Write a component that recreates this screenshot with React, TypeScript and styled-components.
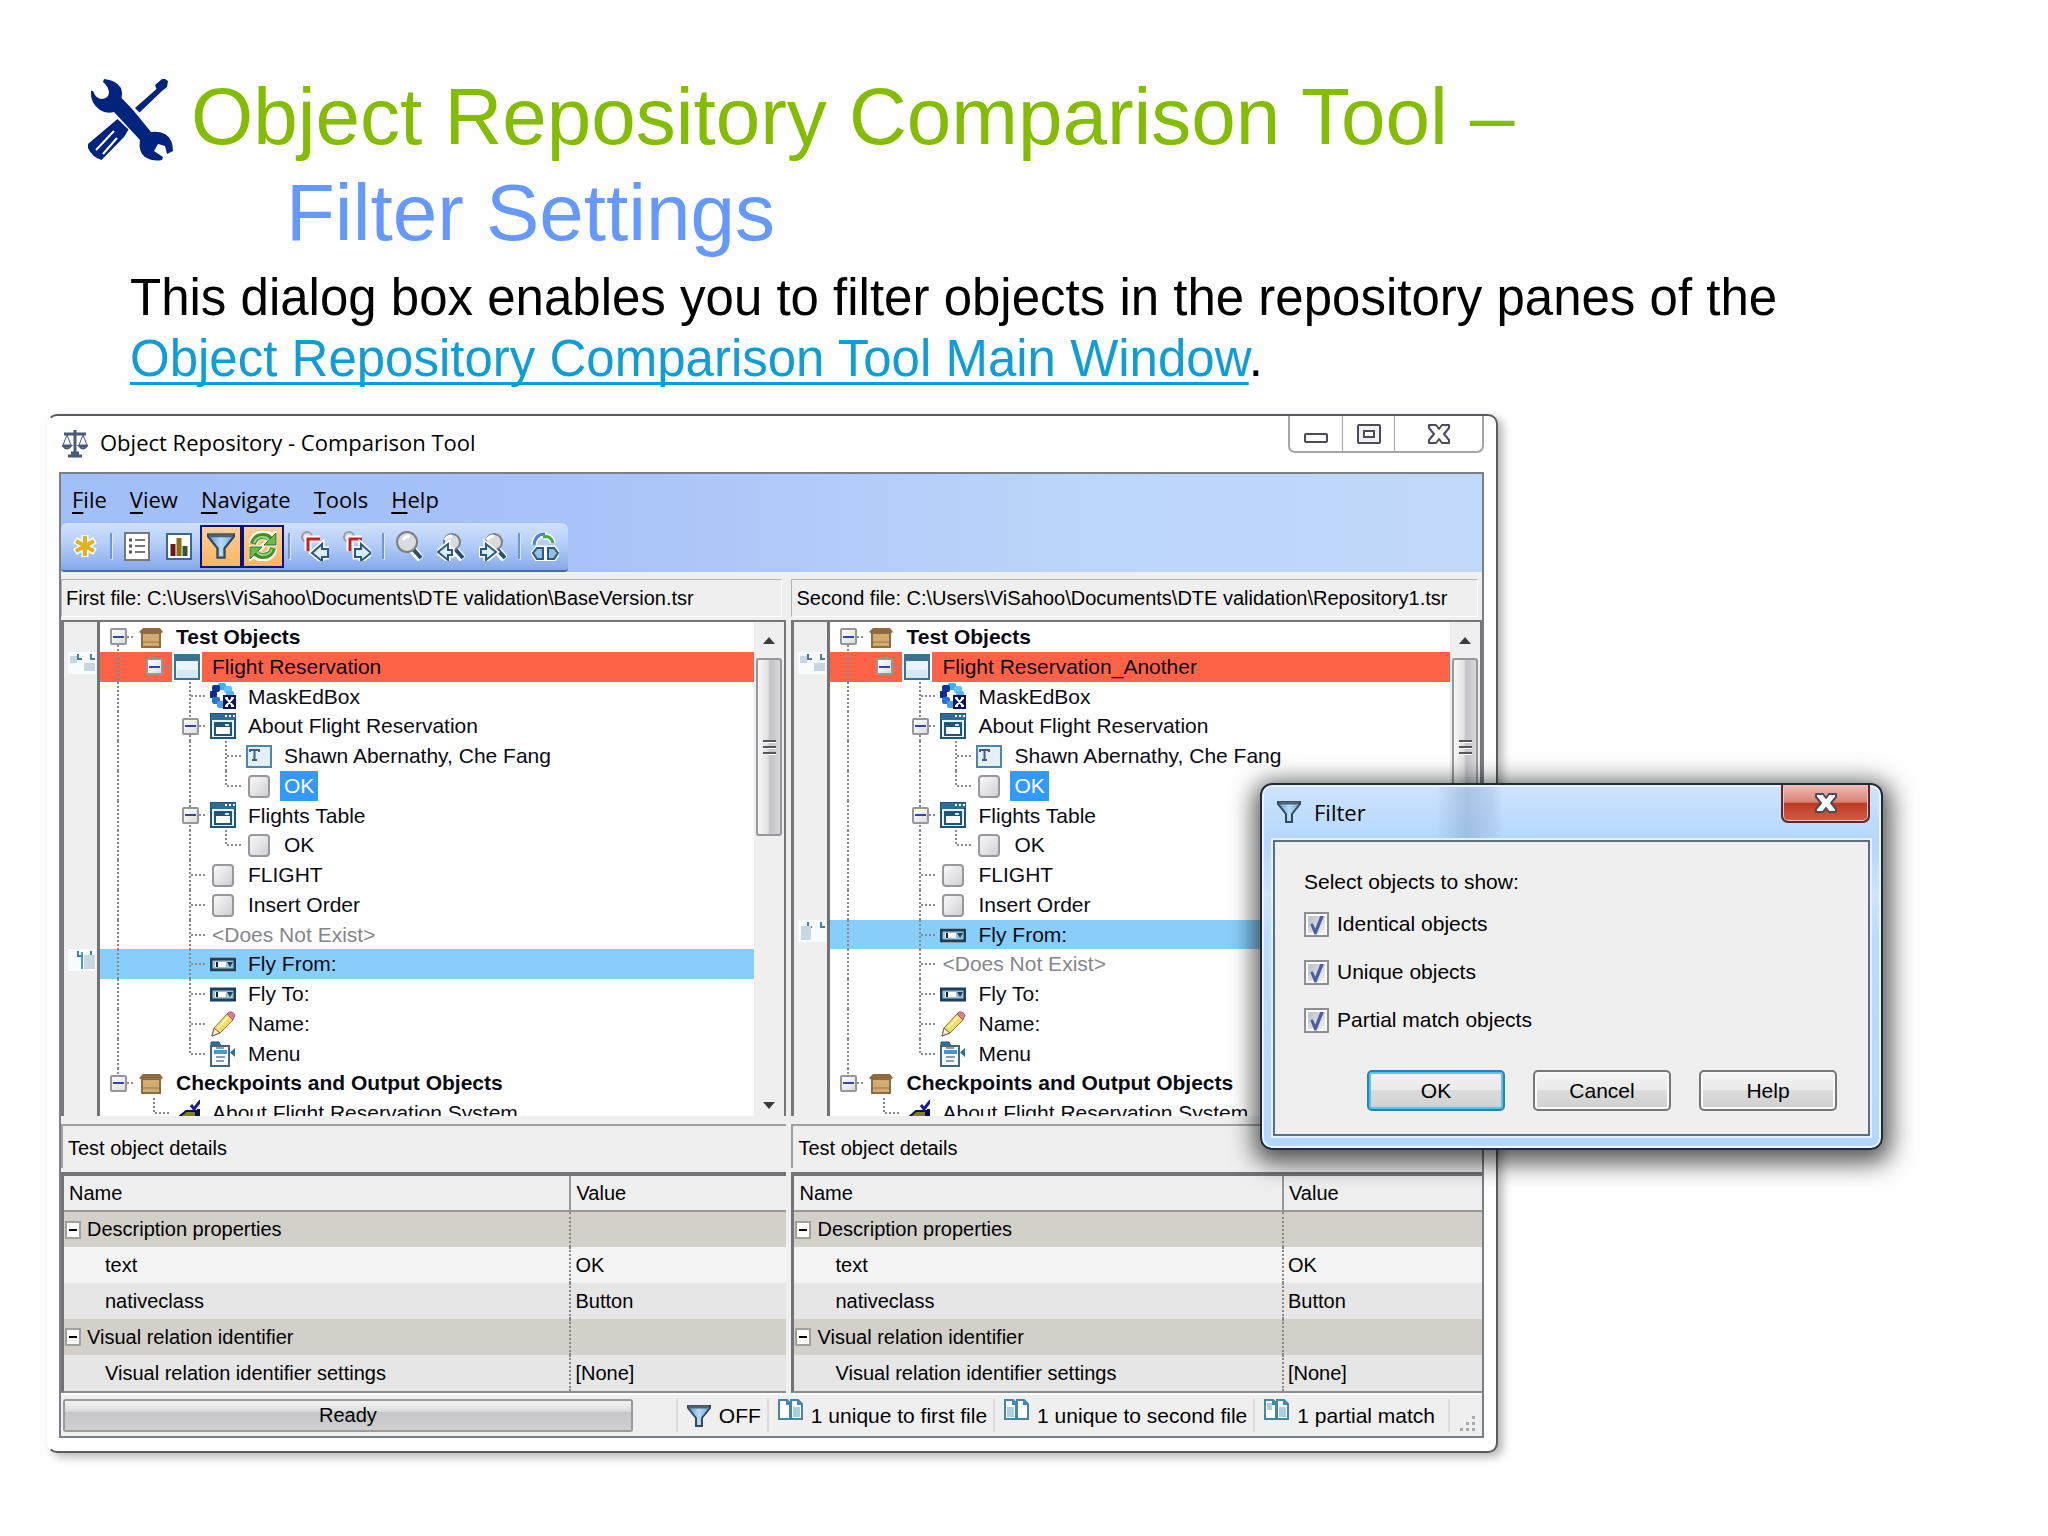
import React from "react";
import styled, { createGlobalStyle, css } from "styled-components";

const SANS = '"Liberation Sans", Arial, sans-serif';
const UI = '"Open Sans", "Noto Sans", sans-serif';

const GlobalStyle = createGlobalStyle`
  * { box-sizing: border-box; }
  body { margin: 0; background: #fefefe; color: #000; font-family: ${SANS}; }
  button { font: inherit; color: inherit; padding: 0; margin: 0; border: 0; background: none; cursor: pointer; }
  svg { display: block; flex: none; }
`;

/* ---------- slide heading ---------- */

const Slide = styled.main`
  padding: 69px 0 84px;
`;

const Title = styled.h1`
  margin: 0;
  font-size: 80px;
  line-height: 96px;
  font-weight: 400;
`;

const TitleLine = styled.span`
  display: flex;
  align-items: center;
  gap: 16px;
  padding-left: 87px;
  color: #84bd00;
`;

const Subtitle = styled.span`
  display: block;
  padding-left: 286px;
  color: #6699ff;
`;

const Intro = styled.p`
  margin: 6px 0 25px;
  padding: 0 200px 0 130px;
  font-size: 51px;
  line-height: 61px;
`;

const IntroLink = styled.a`
  color: #0f9dd9;
  text-decoration: underline;
  text-decoration-thickness: 3px;
  text-underline-offset: 6px;
  text-decoration-skip-ink: none;
`;

const Stage = styled.section`
  position: relative;
  margin: 0 550px 0 47px;
`;

/* ---------- application window ---------- */

const AppWindow = styled.div`
  padding: 0 12px 13px 10px;
  border: 2px solid #5c5c60;
  border-left-color: transparent;
  border-radius: 10px;
  background: #fefefe;
  box-shadow: 5px 4px 8px rgba(0, 0, 0, 0.28);
`;

const TitleBar = styled.header`
  display: flex;
  align-items: center;
  height: 56px;
  padding-left: 3px;
  gap: 12px;
  font-family: ${UI};
  font-size: 22px;
`;

const TitleText = styled.span`
  flex: 1;
  padding-bottom: 4px;
`;

const CaptionGroup = styled.div`
  display: flex;
  align-self: flex-start;
  height: 37px;
  border: 2px solid #a5a5a9;
  border-top: 0;
  border-radius: 0 0 7px 7px;
`;

const CaptionButton = styled.button<{ $wide?: boolean }>`
  display: grid;
  place-items: center;
  width: ${(p) => (p.$wide ? 88 : 52)}px;
  & + & { border-left: 1px solid #a5a5a9; }
`;

const Frame = styled.div`
  border: 2px solid #7b8087;
  background: #f0eff0;
`;

const CommandArea = styled.div`
  background: linear-gradient(90deg, #a1bff7 0%, #a6c2f7 35%, #bcd5fb 72%, #c1d8f9 100%);
`;

const MenuBar = styled.nav`
  display: flex;
  align-items: center;
  gap: 23px;
  height: 49px;
  padding: 0 11px;
  font-family: ${UI};
  font-size: 22px;
`;

const MenuButton = styled.button`
  line-height: 30px;
  & u { text-underline-offset: 4px; }
`;

const Toolbar = styled.div`
  display: inline-flex;
  align-items: center;
  height: 49px;
  padding: 0 2px 1px 3px;
  border-bottom: 2px solid #4666b0;
  border-radius: 6px 6px 4px 4px;
  background: linear-gradient(#d0e1fd, #b4cef8 45%, #84a9ea);
  vertical-align: top;
`;

const ToolButton = styled.button<{ $active?: boolean }>`
  display: grid;
  place-items: center;
  width: 42px;
  height: 43px;
  ${(p) =>
    p.$active &&
    css`
      border: 2px solid #0a1478;
      background: linear-gradient(#ffcf98, #fdb561);
    `}
`;

const ToolSeparator = styled.span`
  width: 2px;
  height: 26px;
  margin: 0 4px;
  background: #6f93d6;
  box-shadow: 1px 1px 0 #dce8fd;
`;

const Panes = styled.div`
  display: grid;
  grid-template-columns: minmax(0, 726fr) minmax(0, 691fr);
  column-gap: 5px;
`;

const Pane = styled.section`
  min-width: 0;
`;

const FileLabel = styled.div`
  height: 38px;
  margin: 7px 4px 3px 0;
  padding-left: 4px;
  border: 1px solid #b2b2b2;
  border-right-color: #fff;
  border-bottom-color: #fff;
  font-size: 20px;
  line-height: 36px;
  white-space: nowrap;
  overflow: hidden;
`;

const TreeBox = styled.div`
  display: flex;
  height: 496px;
  border-top: 2px solid #77777a;
  border-left: 3px solid #77777a;
  background: #fff;
  overflow: hidden;
`;

const rowTrack = css`
  display: grid;
  grid-template-rows: repeat(17, 1fr);
  height: 506px;
  margin: 0;
  padding: 0;
`;

const Gutter = styled.div`
  ${rowTrack}
  flex: none;
  width: 33px;
  justify-items: end;
  background: #f0eff0;
`;

const GutterMark = styled.span<{ $row: number }>`
  grid-row: ${(p) => p.$row};
  align-self: start;
  margin-right: 1px;
`;

const GutterEdge = styled.div`
  flex: none;
  width: 3px;
  background: #737376;
`;

const Tree = styled.ul`
  ${rowTrack}
  flex: 1;
  min-width: 0;
  list-style: none;
  font-size: 21px;
`;

const rowTone = { none: "transparent", red: "#ff6347", blue: "#87cefa" };
type Tone = keyof typeof rowTone;

const TreeRow = styled.li<{ $tone: Tone }>`
  display: flex;
  align-items: stretch;
  min-height: 0;
  white-space: nowrap;
  background: ${(p) => rowTone[p.$tone]};
`;

const vDots = "repeating-linear-gradient(#8a8a8e 0 2px, transparent 2px 4px)";
const hDots = "repeating-linear-gradient(90deg, #8a8a8e 0 2px, transparent 2px 4px)";
const guides: Record<string, string> = {
  " ": "none",
  "|": `${vDots} 17px 0 / 2px 100% no-repeat`,
  T: `${vDots} 17px 0 / 2px 100% no-repeat, ${hDots} 19px 50% / 15px 2px no-repeat`,
  L: `${vDots} 17px 0 / 2px 50% no-repeat, ${hDots} 19px 50% / 15px 2px no-repeat`,
  F: `${vDots} 17px 100% / 2px 50% no-repeat, ${hDots} 19px 50% / 15px 2px no-repeat`,
};

const Guide = styled.span<{ $kind: string }>`
  flex: none;
  display: grid;
  place-items: center;
  width: 36px;
  background: ${(p) => guides[p.$kind]};
`;

const Expander = styled.button`
  display: grid;
  place-items: center;
  width: 17px;
  height: 17px;
  border: 2px solid #97979b;
  border-radius: 2px;
  background: linear-gradient(135deg, #fff, #dcdcdc);
  &::before { content: ""; width: 11px; height: 2px; background: #33459c; }
`;

const IconCell = styled.span<{ $halo?: boolean }>`
  flex: none;
  display: grid;
  place-items: center;
  width: 30px;
  margin-right: 6px;
  background: ${(p) => (p.$halo ? "#fff" : "none")};
`;

const NodeLabel = styled.span<{ $bold?: boolean; $muted?: boolean; $selected?: boolean }>`
  padding: 0 4px;
  line-height: 29px;
  font-weight: ${(p) => (p.$bold ? 700 : 400)};
  color: ${(p) => (p.$selected ? "#fff" : p.$muted ? "#85858a" : "#0a0a14")};
  background: ${(p) => (p.$selected ? "#3399ff" : "none")};
`;

const ScrollBar = styled.div`
  flex: none;
  display: flex;
  flex-direction: column;
  width: 32px;
  padding: 0 2px;
  background: #f0eff0;
  border-right: 2px solid #77777a;
`;

const ScrollArrow = styled.button<{ $down?: boolean }>`
  display: grid;
  place-items: center;
  height: ${(p) => (p.$down ? 20 : 36)}px;
`;

const ScrollThumb = styled.div`
  display: grid;
  place-content: center;
  gap: 3px;
  height: 178px;
  margin-bottom: auto;
  border: 2px solid #98989c;
  border-radius: 3px;
  background: linear-gradient(90deg, #f8f8f8, #e2e2e4 45%, #c3c3c7 55%, #d8d8da);
`;

const Grip = styled.span`
  width: 13px;
  height: 3px;
  border-bottom: 1px solid #fff;
  background: #55555c;
`;

/* ---------- object details ---------- */

const DetailsHeading = styled.h2`
  height: 44px;
  margin: 8px 0 4px;
  padding-left: 5px;
  border-top: 2px solid #a0a0a0;
  border-left: 2px solid #a0a0a0;
  font-size: 20px;
  font-weight: 400;
  line-height: 44px;
`;

const DetailsBox = styled.div`
  border-top: 4px solid #737376;
  border-left: 3px solid #737376;
  border-bottom: 2px solid #8c8c8e;
`;

const DetailsTable = styled.table`
  width: 100%;
  table-layout: fixed;
  border-collapse: collapse;
  font-size: 20px;
`;

const HeadCell = styled.th<{ $value?: number }>`
  width: ${(p) => (p.$value ? `${p.$value}px` : "auto")};
  height: 35px;
  padding: 0 5px;
  border-bottom: 2px solid #98989a;
  border-left: ${(p) => (p.$value ? "2px solid #98989a" : "0")};
  font-weight: 400;
  text-align: left;
`;

const shades = { group: "#d2d0c9", light: "#f4f4f4", dark: "#e7e6e7" };

const DetailRow = styled.tr<{ $shade: keyof typeof shades }>`
  height: 36px;
  background: ${(p) => shades[p.$shade]};
`;

const NameCell = styled.td<{ $child?: boolean }>`
  padding: 0 0 0 ${(p) => (p.$child ? 41 : 1)}px;
  white-space: nowrap;
`;

const ValueCell = styled.td`
  padding: 0 0 0 4px;
  border-left: 2px dotted #88888a;
`;

const GroupName = styled.span`
  display: flex;
  align-items: center;
  gap: 6px;
`;

const GroupToggle = styled.button`
  display: grid;
  place-items: center;
  width: 16px;
  height: 18px;
  border: 2px solid #a0a09c;
  background: #fff;
  &::before { content: ""; width: 8px; height: 2px; background: #000; }
`;

/* ---------- status bar ---------- */

const StatusBar = styled.footer`
  display: flex;
  align-items: stretch;
  height: 43px;
  padding: 4px 0 4px 2px;
  border-top: 2px solid #fff;
  font-size: 21px;
  white-space: nowrap;
`;

const Progress = styled.div`
  flex: 1;
  display: grid;
  place-items: center;
  border: 2px solid #9a9a9c;
  border-radius: 3px;
  background: linear-gradient(#f4f4f4, #dddddd 35%, #c6c6c8 40%, #d0d0d2);
  font-size: 20px;
`;

const StatusItem = styled.div<{ $first?: boolean }>`
  display: flex;
  align-items: center;
  gap: 8px;
  margin-left: ${(p) => (p.$first ? 43 : 0)}px;
  padding: 0 6px 0 9px;
  border-left: 2px solid #dcdcdc;
`;

const StatusText = styled.span`
  min-width: 0;
`;

const RaisedIcon = styled.span`
  align-self: flex-start;
`;

const SizeGrip = styled.div`
  display: flex;
  align-items: flex-end;
  justify-content: flex-end;
  width: 34px;
  margin-left: 7px;
  padding-right: 6px;
  border-left: 2px solid #dcdcdc;
`;

/* ---------- filter dialog ---------- */

const Dialog = styled.div`
  position: absolute;
  top: 369px;
  right: -385px;
  width: 623px;
  padding: 0 11px 12px;
  border: 2px solid #1d2b3c;
  border-radius: 12px;
  background: linear-gradient(90deg, transparent 28%, rgba(120, 150, 190, 0.4) 33%, rgba(150, 180, 215, 0.35) 37%, transparent 39%) top / 100% 56px no-repeat,
    linear-gradient(#cfe4fd 0, #b4d7fd 56px, #cfe4fa 110px, #bcdcff 150px, #b4d7fd 100%);
  box-shadow: inset 0 0 0 2px #eaf5ff, 1px 6px 24px 7px rgba(0, 0, 0, 0.66);
`;

const DialogBar = styled.header`
  display: flex;
  height: 55px;
  padding-left: 4px;
  font-family: ${UI};
  font-size: 22px;
`;

const DialogTitle = styled.h2`
  display: flex;
  align-items: center;
  flex: 1;
  gap: 13px;
  height: 100%;
  margin: 0;
  padding-bottom: 14px;
  padding-top: 12px;
  font: inherit;
`;

const DialogClose = styled.button`
  display: grid;
  place-items: center;
  width: 89px;
  height: 38px;
  border: 2px solid #5b2a2c;
  border-top: 0;
  border-radius: 0 0 7px 7px;
  background: linear-gradient(#eebcb4, #d98275 48%, #c03a22 50%, #cf5c48);
  box-shadow: inset 0 0 0 1px #f0c4bc;
`;

const DialogBody = styled.form`
  padding: 19px 31px 23px 29px;
  border: 2px solid #5c6f80;
  outline: 2px solid #e4f2ff;
  background: #f0eff0;
  font-size: 21px;
`;

const Choices = styled.fieldset`
  display: grid;
  margin: 0;
  padding: 0;
  border: 0;
`;

const Legend = styled.legend`
  padding: 0 0 5px;
  line-height: 42px;
`;

const Choice = styled.label`
  display: flex;
  align-items: center;
  gap: 8px;
  height: 48px;
  padding-bottom: 16px;
`;

const CheckBox = styled.input`
  appearance: none;
  display: grid;
  place-items: center;
  width: 25px;
  height: 25px;
  margin: 0;
  border: 2px solid #8e8f8f;
  outline: 0;
  background: linear-gradient(135deg, #b9bfc9, #f2f2f4) content-box, #fff;
  padding: 2px;
  &:checked::before {
    content: "";
    width: 15px;
    height: 19px;
    background: #4a5f9f;
    clip-path: polygon(8% 45%, 26% 42%, 42% 68%, 76% 0, 100% 0, 50% 100%, 36% 100%);
  }
`;

const DialogActions = styled.div`
  display: flex;
  justify-content: flex-end;
  gap: 28px;
  padding-top: 18px;
`;

const DialogButton = styled.button<{ $primary?: boolean }>`
  width: 138px;
  height: 41px;
  border: 2px solid ${(p) => (p.$primary ? "#2f80ae" : "#77777a")};
  border-radius: 5px;
  background: linear-gradient(#f4f4f4, #ebebeb 48%, #dcdcdd 50%, #cfcfd0);
  box-shadow: inset 0 0 0 2px ${(p) => (p.$primary ? "#4cc9f2" : "#fafafa")};
`;

/* ---------- drawings ---------- */

const ToolsLogo = () => (
  <svg width="88" height="90" viewBox="0 -6 88 90" fill="#00247d" aria-hidden="true">
    <path d="M68 7 75 1 78 1 81 3 80 9 75 13 52.5 34.5 48 30 69.5 11Z" />
    <path d="M30.5 41 41.5 51.5 37 59 14.5 82Q5 79 1 70V66Z" />
    <path d="M27 53 9 72M30 60 16 76" stroke="#fff" strokeWidth="2" />
    <path d="M17 1Q29 2 34 10Q36 15 34.500 20L46 32 64 54Q72 53 78 56Q86 61 86 73L80 76 78 68 71 66 67 73 76 79 75 82Q66 84 58 79Q51 74 53 62L27 34Q19 36 13 32Q3 25 4 13L6 13Q9 21 15 21Q22 20 22 14Q21 8 16 4Z" />
  </svg>
);

const ScalesIcon = () => (
  <svg width="26" height="28" viewBox="0 0 26 28" fill="none" stroke="#475a78" strokeWidth="2" aria-hidden="true">
    <path d="M2 4H24M13 0V24" strokeWidth="3" />
    <path d="M5 5 1 15H9ZM21 5 17 15H25Z" strokeWidth="1" />
    <path d="M1 16Q5 21 9 16ZM17 16Q21 21 25 16Z" fill="#9fb3cc" />
    <path d="M6 26H20M9 23H17" strokeWidth="3" />
  </svg>
);

const MinimizeIcon = () => (
  <svg width="24" height="24" viewBox="0 0 24 24" aria-hidden="true">
    <rect x="1" y="12" width="22" height="8" rx="1" fill="#fff" stroke="#4c4c58" strokeWidth="2" />
  </svg>
);

const MaximizeIcon = () => (
  <svg width="24" height="22" viewBox="0 0 24 22" stroke="#4c4c58" strokeWidth="2" aria-hidden="true">
    <rect x="1" y="2" width="22" height="18" rx="1" fill="#f1f1f3" />
    <rect x="7" y="8" width="10" height="6" fill="#fff" />
  </svg>
);

const CloseIcon = () => (
  <svg width="24" height="22" viewBox="0 0 24 22" aria-hidden="true">
    <path d="M2 2H9L12 6 15 2H22V5L17 11 22 17V20H15L12 16 9 20H2V17L7 11 2 5Z" fill="#fff" stroke="#4c4c58" strokeWidth="2" strokeLinejoin="round" />
  </svg>
);

const FunnelIcon = ({ size = 24 }: { size?: number }) => (
  <svg width={size} height={size} viewBox="0 0 24 24" aria-hidden="true">
    <defs>
      <linearGradient id="funnelFill" x1="0" y1="0" x2="1" y2="0">
        <stop offset="0" stopColor="#5d94c4" />
        <stop offset="0.5" stopColor="#b5dcf8" />
        <stop offset="1" stopColor="#6ea6d6" />
      </linearGradient>
    </defs>
    <path d="M1 2H23V4L15 14V22H9V14L1 4Z" fill="url(#funnelFill)" stroke="#34475e" strokeWidth="2" />
    <path d="M2 3H22" stroke="#53616f" strokeWidth="3" />
  </svg>
);

const box28 = { width: 28, height: 30, viewBox: "0 0 28 30", fill: "none", "aria-hidden": true } as const;

const StarIcon = () => (
  <svg {...box28}>
    <path d="M14 4V26M4 9 24 21M24 9 4 21" stroke="#fff" strokeWidth="7" />
    <path d="M14 5V25M5 10 23 20M23 10 5 20" stroke="#e3b01e" strokeWidth="4" />
  </svg>
);

const ListIcon = () => (
  <svg {...box28}>
    <rect x="2" y="2" width="24" height="27" fill="#fff" stroke="#77777c" strokeWidth="2" />
    <path d="M6 9H9M6 15H9M6 21H9" stroke="#55555a" strokeWidth="3" />
    <path d="M12 9H22M12 15H22M12 21H22" stroke="#77777c" strokeWidth="2" />
  </svg>
);

const ChartIcon = () => (
  <svg {...box28}>
    <rect x="2" y="3" width="24" height="25" fill="#fff" stroke="#3d6a8a" strokeWidth="2" />
    <path d="M8 25V13" stroke="#6b1a1c" strokeWidth="5" />
    <path d="M14 25V7" stroke="#8a6d12" strokeWidth="5" />
    <path d="M20 25V15" stroke="#2c5a2a" strokeWidth="5" />
  </svg>
);

const SyncIcon = () => (
  <svg {...box28}>
    <path d="M4 13Q6 4 14 4Q19 4 22 7M24 17Q22 26 14 26Q9 26 6 23" stroke="#fff" strokeWidth="9" />
    <path d="M27 1V14H14ZM1 29V16H14Z" fill="#fff" stroke="#fff" strokeWidth="3" />
    <path d="M4 13Q6 5 14 5Q19 5 21 8M24 17Q22 25 14 25Q9 25 7 22" stroke="#3f8f2c" strokeWidth="6" />
    <path d="M27 2V14H15Z M1 28V16H13Z" fill="#6fb850" stroke="#2f7420" />
    <path d="M5 12Q7 6 14 6Q18 6 20 9M23 18Q21 24 14 24Q10 24 8 21" stroke="#9fd67c" strokeWidth="2" />
  </svg>
);

const arrowPath = { left: "M27 18H21V13L11 22 21 30V26H27Z", right: "M12 18H18V13L28 22 18 30V26H12Z" };

const DiffIcon = ({ dir }: { dir: "left" | "right" }) => (
  <svg {...box28}>
    <circle cx="6" cy="6" r="5" fill="#d9d9dd" stroke="#9a9aa0" strokeWidth="2" />
    <path d="M19 8H7V20" stroke="#fff" strokeWidth="7" />
    <path d="M19 8H7V20" stroke="#c62222" strokeWidth="3" />
    <path d={arrowPath[dir]} fill="#e6f3fc" stroke="#fff" strokeWidth="5" />
    <path d={arrowPath[dir]} fill="#d9edfa" stroke="#2f577c" strokeWidth="2" />
  </svg>
);

const SearchIcon = ({ dir }: { dir?: "left" | "right" }) => (
  <svg {...box28}>
    <path d="M18 19 26 28" stroke="#fff" strokeWidth="8" />
    <path d="M18 18 26 27" stroke="#274f74" strokeWidth="4" />
    <circle cx={dir ? 15 : 12} cy="11" r={dir ? 8 : 10} fill="#d9dcde" stroke="#7d7d82" strokeWidth="2" />
    <path d="M8 9Q10 5 15 5" stroke="#fff" strokeWidth="3" />
    {dir && (
      <>
        <path d={dir === "left" ? "M15 19H11V13L1 21 11 29V24H15Z" : "M2 18H7V13L17 21 7 29V24H2Z"} stroke="#fff" strokeWidth="5" />
        <path
          d={dir === "left" ? "M15 19H11V13L1 21 11 29V24H15Z" : "M2 18H7V13L17 21 7 29V24H2Z"}
          fill="#d9edfa"
          stroke="#2f577c"
          strokeWidth="2"
        />
      </>
    )}
  </svg>
);

const SwapIcon = () => (
  <svg {...box28}>
    <path d="M3 14Q4 3 16 4M12 6Q20 4 22 12" stroke="#fff" strokeWidth="6" />
    <path d="M3 14Q4 3 14 3" stroke="#4a7fe0" strokeWidth="3" />
    <path d="M12 6Q20 4 22 12" stroke="#3fae3a" strokeWidth="3" />
    <path d="M6 17H12V28H6L2 22ZM17 17H23L27 22 23 28H17Z" stroke="#fff" strokeWidth="5" />
    <path d="M6 17H12V28H6L2 22ZM17 17H23L27 22 23 28H17Z" fill="#8fc0e6" stroke="#2f577c" strokeWidth="2" />
  </svg>
);

type IconKind = "box" | "window" | "ocx" | "dialog" | "static" | "button" | "combo" | "edit" | "menu" | "check";

const ocxDots: [number, number, string][] = [
  [12, 3, "#39b0ea"], [18, 6, "#5cc4ee"], [6, 5, "#12319c"], [3, 11, "#0d2a8c"],
  [6, 17, "#2c6fd2"], [11, 21, "#4aa0e6"], [20, 11, "#58b6ea"],
];

const drawings: Record<IconKind, React.ReactNode> = {
  box: (
    <>
      <path d="M1 8 5 4H22L25 8 22 10H4Z" fill="#8e6b40" />
      <rect x="4" y="9" width="18" height="14" fill="#d3ac72" stroke="#8e6b40" strokeWidth="2" />
      <path d="M5 18H21" stroke="#b98f55" strokeWidth="2" />
    </>
  ),
  window: (
    <>
      <rect x="1" y="1" width="24" height="24" fill="#eaf5fb" stroke="#3a7296" strokeWidth="2" />
      <path d="M1 4H25" stroke="#3a7296" strokeWidth="6" />
      <path d="M3 20H23" stroke="#d2e8f4" strokeWidth="8" />
    </>
  ),
  ocx: (
    <>
      {ocxDots.map(([x, y, fill]) => (
        <rect key={`${x}-${y}`} x={x - 4} y={y - 3} width="8" height="7" rx="2" fill={fill} />
      ))}
      <rect x="13" y="12" width="13" height="14" fill="#0a1260" />
      <path d="M16 15 23 23M23 15 16 23M15 15H18M21 15H24M15 23H18M21 23H24" stroke="#fff" strokeWidth="2" />
    </>
  ),
  dialog: (
    <>
      <rect x="1" y="1" width="24" height="24" fill="#e8f4fb" stroke="#1f5578" strokeWidth="2" />
      <path d="M1 4H25" stroke="#2f6d94" strokeWidth="6" />
      <path d="M15 3H17M19 3H21M23 3H25" stroke="#fff" strokeWidth="2" />
      <rect x="5" y="10" width="16" height="12" fill="#fff" stroke="#1f5578" strokeWidth="2" />
      <path d="M5 12H21" stroke="#1f5578" strokeWidth="4" />
      <path d="M15 12H19" stroke="#cfe6f4" strokeWidth="2" />
    </>
  ),
  static: (
    <>
      <rect x="1" y="3" width="24" height="21" fill="#e3f0f8" stroke="#4d86a8" strokeWidth="2" />
      <path d="M4 9V7H13V9M8.500 7V17M6 17H11" fill="none" stroke="#3f5f7c" strokeWidth="2" />
    </>
  ),
  button: <rect x="3" y="3" width="20" height="21" rx="3" fill="url(#btnFace)" stroke="#98989c" strokeWidth="2" />,
  combo: (
    <>
      <rect x="0" y="6" width="26" height="15" fill="#fff" />
      <rect x="1" y="8" width="24" height="11" fill="#9fc0d4" stroke="#1c4059" strokeWidth="3" />
      <rect x="5" y="11" width="11" height="5" fill="#fff" />
      <path d="M7 11V16" stroke="#10202c" strokeWidth="2" />
      <path d="M17 11H23L20 16Z" fill="#1c4059" />
    </>
  ),
  edit: (
    <>
      <path d="M2 25 4 17 17 3 23 9 10 22Z" fill="#f5dc69" stroke="#8d7838" strokeWidth="1" />
      <path d="M17 3 19 1Q23 0 25 4L23 9Z" fill="#d98095" stroke="#a55c6e" />
      <path d="M2 25 4 17 10 22Z" fill="#f4ead2" stroke="#6e6248" />
      <path d="M8 17 18 6" stroke="#fff2ac" strokeWidth="2" />
    </>
  ),
  menu: (
    <>
      <path d="M1 5V1H9L11 5Z" fill="#2f7099" stroke="#1f5578" />
      <path d="M1 5H19V25H1Z" fill="#f4f9fc" stroke="#45667e" strokeWidth="2" />
      <path d="M4 11H17" stroke="#4b97cc" strokeWidth="4" />
      <path d="M6 7H14M6 16H15M6 20H14" stroke="#8aa0ae" strokeWidth="2" />
      <path d="M25 7V16L20 11.500Z" fill="#2f7099" />
    </>
  ),
  check: (
    <>
      <path d="M0 17H5L12 11H22V26H2Z" fill="#80801c" stroke="#0a0a50" strokeWidth="2" />
      <path d="M17 5 20 9 27 0" fill="none" stroke="#1a1a9a" strokeWidth="3" />
      <path d="M25 9V26" stroke="#0a0a60" strokeWidth="4" />
    </>
  ),
};

const NodeIcon = ({ kind }: { kind: IconKind }) => (
  <svg width="26" height="26" viewBox="0 0 26 26" aria-hidden="true">
    {kind === "button" && (
      <defs>
        <linearGradient id="btnFace" x1="0" y1="0" x2="1" y2="1">
          <stop offset="0" stopColor="#fbfbfb" />
          <stop offset="1" stopColor="#cfcdd2" />
        </linearGradient>
      </defs>
    )}
    {drawings[kind]}
  </svg>
);

type Mark = "moved" | "second" | "first";

const MarkIcon = ({ kind }: { kind: Mark }) => (
  <svg width="28" height="22" viewBox="0 0 28 22" aria-hidden="true">
    <rect width="28" height="22" fill="#f9fcfd" />
    <path d="M10 2V7H14M23 2V7H27" fill="none" stroke="#4b7f9e" strokeWidth="2" />
    {kind === "moved" && <path d="M2 4H9V11H2ZM16 11H27V19H16Z" fill="#c4d7e2" />}
    {kind === "first" && <path d="M3 6H13V20H3Z" fill="#c8d9e3" />}
    {kind === "second" && (
      <>
        <path d="M16 6H27V20H16Z" fill="#c8d9e3" />
        <path d="M14 3V20" stroke="#4b9bc0" strokeWidth="2" />
      </>
    )}
  </svg>
);

const FilesIcon = ({ kind }: { kind: Mark }) => (
  <svg width="25" height="21" viewBox="0 0 25 21" aria-hidden="true">
    <path d="M1 1H9L12 4V20H1ZM13 1H20L24 5V20H13Z" fill="#fff" stroke="#4585a6" strokeWidth="2" />
    <path d="M9 1V5H12M20 1V5H24" fill="none" stroke="#4585a6" strokeWidth="2" />
    {kind !== "second" && <path d="M15 8H22V18H15Z" fill="#a9cfe2" />}
    {kind === "second" && <path d="M3 8H10V18H3Z" fill="#a9cfe2" />}
    {kind === "moved" && <path d="M3 4H8V11H3Z" fill="#a9cfe2" />}
  </svg>
);

const Triangle = ({ up }: { up?: boolean }) => (
  <svg width="12" height="8" viewBox="0 0 12 8" aria-hidden="true">
    <path d={up ? "M0 8 6 1 12 8Z" : "M0 0 6 7 12 0Z"} fill="#3c3c40" />
  </svg>
);

/* ---------- data ---------- */

interface NodeData {
  guides: string;
  label: string;
  icon?: IconKind;
  open?: boolean;
  bold?: boolean;
  muted?: boolean;
  selected?: boolean;
  tone?: Tone;
}

const flyFrom: NodeData = { guides: "| T", label: "Fly From:", icon: "combo", tone: "blue" };
const missing: NodeData = { guides: "| T", label: "<Does Not Exist>", muted: true };

const buildTree = (root: string, flight: NodeData[]): NodeData[] => [
  { guides: "F", label: "Test Objects", icon: "box", open: true, bold: true },
  { guides: "|L", label: root, icon: "window", open: true, tone: "red" },
  { guides: "| T", label: "MaskEdBox", icon: "ocx" },
  { guides: "| T", label: "About Flight Reservation", icon: "dialog", open: true },
  { guides: "| |T", label: "Shawn Abernathy, Che Fang", icon: "static" },
  { guides: "| |L", label: "OK", icon: "button", selected: true },
  { guides: "| T", label: "Flights Table", icon: "dialog", open: true },
  { guides: "| |L", label: "OK", icon: "button" },
  { guides: "| T", label: "FLIGHT", icon: "button" },
  { guides: "| T", label: "Insert Order", icon: "button" },
  ...flight,
  { guides: "| T", label: "Fly To:", icon: "combo" },
  { guides: "| T", label: "Name:", icon: "edit" },
  { guides: "| L", label: "Menu", icon: "menu" },
  { guides: "L", label: "Checkpoints and Output Objects", icon: "box", open: true, bold: true },
  { guides: " L", label: "About Flight Reservation System", icon: "check" },
];

interface PaneData {
  file: string;
  nodes: NodeData[];
  marks: { row: number; kind: Mark }[];
  valueWidth: number;
}

const panes: PaneData[] = [
  {
    file: "First file: C:\\Users\\ViSahoo\\Documents\\DTE validation\\BaseVersion.tsr",
    nodes: buildTree("Flight Reservation", [missing, flyFrom]),
    marks: [{ row: 2, kind: "moved" }, { row: 12, kind: "second" }],
    valueWidth: 216,
  },
  {
    file: "Second file: C:\\Users\\ViSahoo\\Documents\\DTE validation\\Repository1.tsr",
    nodes: buildTree("Flight Reservation_Another", [flyFrom, missing]),
    marks: [{ row: 2, kind: "moved" }, { row: 11, kind: "first" }],
    valueWidth: 199,
  },
];

const details = [
  { group: "Description properties", items: [["text", "OK", "light"], ["nativeclass", "Button", "dark"]] },
  { group: "Visual relation identifier", items: [["Visual relation identifier settings", "[None]", "dark"]] },
];

/* ---------- composition ---------- */

const TreeNode = ({ node }: { node: NodeData }) => {
  const kinds = node.guides.split("");
  return (
    <TreeRow $tone={node.tone ?? "none"} role="treeitem">
      {kinds.map((kind, i) => (
        <Guide key={i} $kind={kind}>
          {node.open && i === kinds.length - 1 && <Expander type="button" aria-label={`Collapse ${node.label}`} />}
        </Guide>
      ))}
      {node.icon && (
        <IconCell $halo={node.tone === "red"}>
          <NodeIcon kind={node.icon} />
        </IconCell>
      )}
      <NodeLabel $bold={node.bold} $muted={node.muted} $selected={node.selected}>
        {node.label}
      </NodeLabel>
    </TreeRow>
  );
};

const RepositoryPane = ({ pane }: { pane: PaneData }) => (
  <Pane>
    <FileLabel>{pane.file}</FileLabel>
    <TreeBox>
      <Gutter>
        {pane.marks.map((m) => (
          <GutterMark key={m.row} $row={m.row}>
            <MarkIcon kind={m.kind} />
          </GutterMark>
        ))}
      </Gutter>
      <GutterEdge />
      <Tree role="tree">
        {pane.nodes.map((node, i) => (
          <TreeNode key={i} node={node} />
        ))}
      </Tree>
      <ScrollBar>
        <ScrollArrow type="button" aria-label="Scroll up"><Triangle up /></ScrollArrow>
        <ScrollThumb><Grip /><Grip /><Grip /></ScrollThumb>
        <ScrollArrow type="button" aria-label="Scroll down" $down><Triangle /></ScrollArrow>
      </ScrollBar>
    </TreeBox>
    <DetailsHeading>Test object details</DetailsHeading>
    <DetailsBox>
      <DetailsTable>
        <thead>
          <tr>
            <HeadCell>Name</HeadCell>
            <HeadCell $value={pane.valueWidth}>Value</HeadCell>
          </tr>
        </thead>
        <tbody>
          {details.map((d) => (
            <React.Fragment key={d.group}>
              <DetailRow $shade="group">
                <NameCell>
                  <GroupName>
                    <GroupToggle type="button" aria-label={`Collapse ${d.group}`} />
                    {d.group}
                  </GroupName>
                </NameCell>
                <ValueCell />
              </DetailRow>
              {d.items.map(([name, value, shade]) => (
                <DetailRow key={name} $shade={shade as "light" | "dark"}>
                  <NameCell $child>{name}</NameCell>
                  <ValueCell>{value}</ValueCell>
                </DetailRow>
              ))}
            </React.Fragment>
          ))}
        </tbody>
      </DetailsTable>
    </DetailsBox>
  </Pane>
);

const FilterDialog = () => (
  <Dialog role="dialog" aria-labelledby="filter-title">
    <DialogBar>
      <DialogTitle id="filter-title"><FunnelIcon />Filter</DialogTitle>
      <DialogClose type="button" aria-label="Close"><CloseIcon /></DialogClose>
    </DialogBar>
    <DialogBody onSubmit={(e) => e.preventDefault()}>
      <Choices>
        <Legend>Select objects to show:</Legend>
        {["Identical objects", "Unique objects", "Partial match objects"].map((text) => (
          <Choice key={text}>
            <CheckBox type="checkbox" defaultChecked />
            {text}
          </Choice>
        ))}
      </Choices>
      <DialogActions>
        <DialogButton $primary type="submit">OK</DialogButton>
        <DialogButton type="button">Cancel</DialogButton>
        <DialogButton type="button">Help</DialogButton>
      </DialogActions>
    </DialogBody>
  </Dialog>
);

export default function App() {
  return (
    <>
      <GlobalStyle />
      <Slide>
        <Title>
          <TitleLine><ToolsLogo />Object Repository Comparison Tool –</TitleLine>
          <Subtitle>Filter Settings</Subtitle>
        </Title>
        <Intro>
          This dialog box enables you to filter objects in the repository panes of the{" "}
          <IntroLink href="#main-window">Object Repository Comparison Tool Main Window</IntroLink>.
        </Intro>
        <Stage>
          <AppWindow id="main-window">
            <TitleBar>
              <ScalesIcon />
              <TitleText>Object Repository - Comparison Tool</TitleText>
              <CaptionGroup>
                <CaptionButton type="button" aria-label="Minimize"><MinimizeIcon /></CaptionButton>
                <CaptionButton type="button" aria-label="Maximize"><MaximizeIcon /></CaptionButton>
                <CaptionButton type="button" aria-label="Close" $wide><CloseIcon /></CaptionButton>
              </CaptionGroup>
            </TitleBar>
            <Frame>
              <CommandArea>
                <MenuBar>
                  {["File", "View", "Navigate", "Tools", "Help"].map((m) => (
                    <MenuButton key={m} type="button"><u>{m[0]}</u>{m.slice(1)}</MenuButton>
                  ))}
                </MenuBar>
                <Toolbar role="toolbar">
                  <ToolButton type="button" aria-label="New comparison"><StarIcon /></ToolButton>
                  <ToolSeparator />
                  <ToolButton type="button" aria-label="Color settings"><ListIcon /></ToolButton>
                  <ToolButton type="button" aria-label="Statistics"><ChartIcon /></ToolButton>
                  <ToolButton type="button" aria-label="Filter" $active><FunnelIcon size={28} /></ToolButton>
                  <ToolButton type="button" aria-label="Synchronize nodes" $active><SyncIcon /></ToolButton>
                  <ToolSeparator />
                  <ToolButton type="button" aria-label="Previous difference"><DiffIcon dir="left" /></ToolButton>
                  <ToolButton type="button" aria-label="Next difference"><DiffIcon dir="right" /></ToolButton>
                  <ToolSeparator />
                  <ToolButton type="button" aria-label="Find"><SearchIcon /></ToolButton>
                  <ToolButton type="button" aria-label="Find previous"><SearchIcon dir="left" /></ToolButton>
                  <ToolButton type="button" aria-label="Find next"><SearchIcon dir="right" /></ToolButton>
                  <ToolSeparator />
                  <ToolButton type="button" aria-label="Swap files"><SwapIcon /></ToolButton>
                </Toolbar>
              </CommandArea>
              <Panes>
                {panes.map((pane) => (
                  <RepositoryPane key={pane.file} pane={pane} />
                ))}
              </Panes>
              <StatusBar>
                <Progress>Ready</Progress>
                <StatusItem $first><FunnelIcon /><StatusText>OFF</StatusText></StatusItem>
                <StatusItem><RaisedIcon><FilesIcon kind="first" /></RaisedIcon><StatusText>1 unique to first file</StatusText></StatusItem>
                <StatusItem><RaisedIcon><FilesIcon kind="second" /></RaisedIcon><StatusText>1 unique to second file</StatusText></StatusItem>
                <StatusItem><RaisedIcon><FilesIcon kind="moved" /></RaisedIcon><StatusText>1 partial match</StatusText></StatusItem>
                <SizeGrip>
                  <svg width="16" height="16" viewBox="0 0 16 16" fill="#a8a8aa" aria-hidden="true">
                    <path d="M12 0h3v3h-3zM6 6h3v3H6zM12 6h3v3h-3zM0 12h3v3H0zM6 12h3v3H6zM12 12h3v3h-3z" />
                  </svg>
                </SizeGrip>
              </StatusBar>
            </Frame>
          </AppWindow>
          <FilterDialog />
        </Stage>
      </Slide>
    </>
  );
}
